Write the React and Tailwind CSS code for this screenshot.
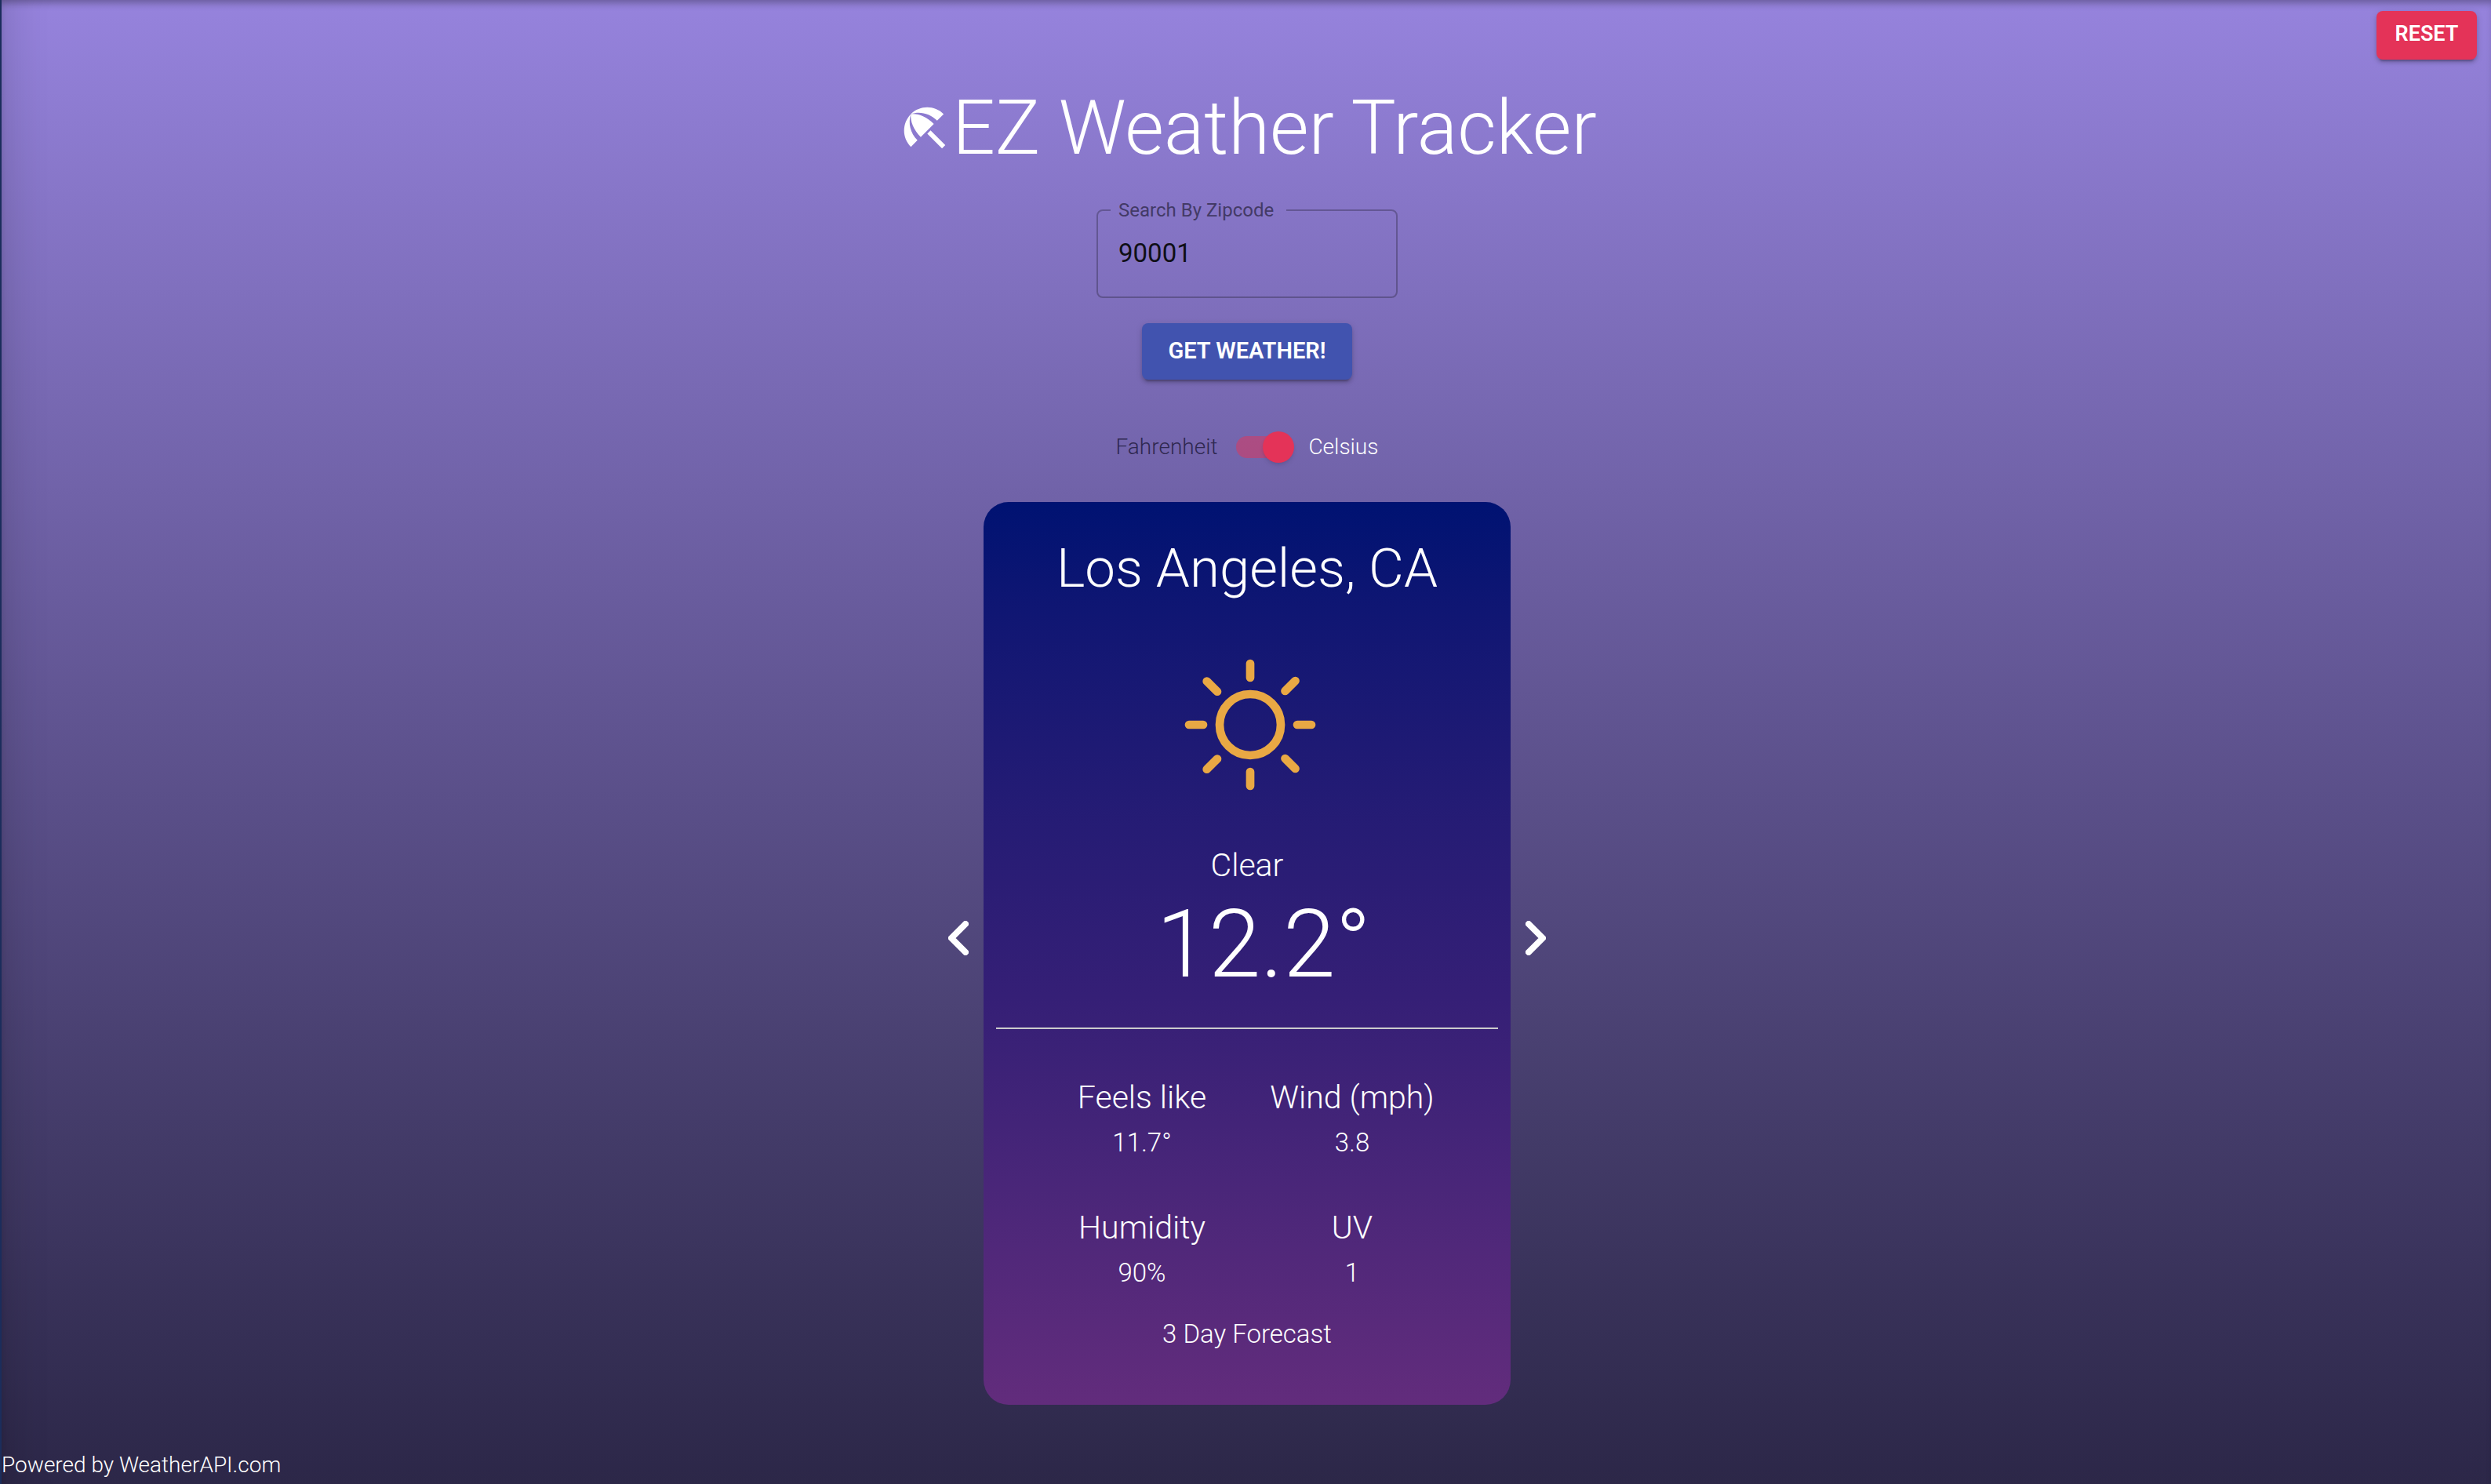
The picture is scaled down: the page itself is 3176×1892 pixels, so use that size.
import { MdBeachAccess } from "react-icons/md";

const stats = [
  { label: "Feels like", value: "11.7°" },
  { label: "Wind (mph)", value: "3.8" },
  { label: "Humidity", value: "90%" },
  { label: "UV", value: "1" },
];

const raised =
  "shadow-[0_6px_2px_-4px_rgba(0,0,0,0.2),0_4px_4px_0_rgba(0,0,0,0.14),0_2px_10px_0_rgba(0,0,0,0.12)]";

function SunIcon({ className }) {
  return (
    <svg
      viewBox="-84 -84 168 168"
      className={className}
      fill="none"
      stroke="currentColor"
      strokeWidth="10.7"
      strokeLinecap="round"
      aria-hidden="true"
    >
      <circle r="39" />
      <path d="M0-78V-60M0 60V78M-78 0H-60M60 0H78M57.5-56L44.5-43M-55.3-55.5L-42-42.3M44.5 43L57.5 56M-42 43.5L-55.3 56.7" />
    </svg>
  );
}

function Chevron({ d }) {
  return (
    <svg
      viewBox="0 0 26 44"
      className="h-11 w-[26px]"
      fill="none"
      stroke="currentColor"
      strokeWidth="8"
      strokeLinecap="round"
      strokeLinejoin="round"
      aria-hidden="true"
    >
      <path d={d} />
    </svg>
  );
}

function Stat({ label, value }) {
  return (
    <div className="flex flex-col items-center">
      <dt className="text-[41px] leading-[60px]">{label}</dt>
      <dd className="text-[33px] leading-[56px]">{value}</dd>
    </div>
  );
}

function WeatherCard() {
  return (
    <section className="flex w-[672px] flex-col items-center rounded-[32px] bg-linear-to-b from-[#001272] via-[#351f76] via-55% to-[#622c7c] px-4 pt-10 pb-16 text-center text-white">
      <h2 className="text-[69px] leading-[90px]">Los Angeles, CA</h2>
      <SunIcon className="mt-[70px] ml-2 size-[168px] text-[#e9a844]" />
      <p className="mt-16 text-[41px] leading-[62px]">Clear</p>
      <p className="ml-[42px] text-[120px] leading-[140px]">12.2°</p>
      <hr className="mt-9 w-full border-t-2 border-[#cccccc]" />
      <dl className="mt-[57px] grid grid-cols-[268px_268px] gap-y-[50px]">
        {stats.map((s) => (
          <Stat key={s.label} label={s.label} value={s.value} />
        ))}
      </dl>
      <p className="mt-6 text-[33px] leading-[52px]">3 Day Forecast</p>
    </section>
  );
}

export default function App() {
  return (
    <div className="flex min-h-screen flex-col border-l-2 border-[#1b2d5c] bg-linear-to-b from-[#9683dd] to-[#2c2748] font-['Roboto',sans-serif] font-light text-white shadow-[inset_0_8px_10px_-4px_rgba(0,0,0,0.3),inset_60px_0_60px_-60px_rgba(0,0,0,0.18)]">
      <div className="flex h-[78px] justify-end pt-[14px] pr-[18px]">
        <button
          type="button"
          className={`h-[62px] w-32 rounded-lg bg-[#e43358] pb-1 text-[27px] font-semibold ${raised}`}
        >
          RESET
        </button>
      </div>
      <main className="flex flex-col items-center pl-[2px]">
        <h1 className="mt-5 flex items-center text-[96px] leading-[130px]">
          <MdBeachAccess className="size-[70px]" aria-hidden="true" />
          EZ Weather Tracker
        </h1>
        <fieldset className="mt-[26px] h-[126px] w-[384px] rounded-lg border-2 border-black/25 px-4 font-normal text-[#0f0f16]">
          <legend className="w-56 px-[10px] text-2xl leading-7 text-[#433a66]">
            <label htmlFor="zip">Search By Zipcode</label>
          </legend>
          <input
            id="zip"
            type="text"
            defaultValue="90001"
            className="mt-[22px] w-full bg-transparent px-[10px] text-[33px] leading-[38px] outline-none"
          />
        </fieldset>
        <button
          type="button"
          className={`mt-8 h-[72px] w-[268px] rounded-lg bg-[#4153af] text-[29px] font-semibold ${raised}`}
        >
          GET WEATHER!
        </button>
        <div className="mt-[66px] flex items-center text-[28px] leading-10">
          <span className="text-[#2f2850]">Fahrenheit</span>
          <label className="relative mr-[18px] ml-6 flex h-10 w-[74px] items-center">
            <input type="checkbox" role="switch" defaultChecked aria-label="Use Celsius" className="peer sr-only" />
            <span className="h-7 w-[68px] rounded-full bg-[#e43358]/50" />
            <span className="absolute top-0 right-0 size-10 rounded-full bg-[#e43358] shadow-md" />
          </label>
          <span>Celsius</span>
        </div>
        <div className="mt-[50px] flex items-center">
          <button type="button" aria-label="Previous" className="px-[19px] pb-10">
            <Chevron d="M22 4L4 22L22 40" />
          </button>
          <WeatherCard />
          <button type="button" aria-label="Next" className="px-[19px] pb-10">
            <Chevron d="M4 4L22 22L4 40" />
          </button>
        </div>
      </main>
      <footer className="mt-auto text-[28px] leading-[48px]">
        <a href="https://www.weatherapi.com/">Powered by WeatherAPI.com</a>
      </footer>
    </div>
  );
}
